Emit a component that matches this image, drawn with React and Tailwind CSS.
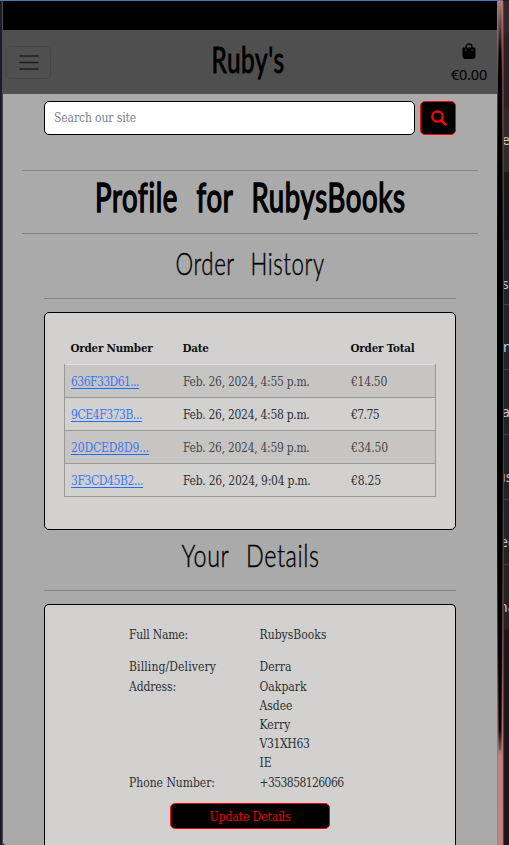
import { useLayoutEffect, useRef, useState } from "react";

// Slab text whose letter spacing is computed so that it spans `w` pixels.
function Slab({ w, className = "", children }) {
  const ref = useRef(null);
  const [gap, setGap] = useState(0);
  useLayoutEffect(() => {
    const width = ref.current.getBoundingClientRect().width;
    setGap((w - width) / String(children).length);
  }, [w, children]);
  return (
    <span ref={ref} className={"inline-block whitespace-nowrap " + className} style={{ letterSpacing: gap + "px" }}>
      {children}
    </span>
  );
}

// Tall, condensed display lettering squeezed to `w` pixels.
function Script({ w, className = "", children }) {
  const ref = useRef(null);
  const [scale, setScale] = useState(1);
  useLayoutEffect(() => {
    setScale(w / ref.current.offsetWidth);
  }, [w]);
  return (
    <span className="flex justify-center" style={{ width: w + "px" }}>
      <span
        ref={ref}
        className={"inline-block shrink-0 whitespace-nowrap font-['Lato',sans-serif] " + className}
        style={{ transform: `scaleX(${scale})` }}
      >
        {children}
      </span>
    </span>
  );
}

const orders = [
  ["636F33D61...", 68, "Feb. 26, 2024, 4:55 p.m.", 126.5, "€14.50", 36],
  ["9CE4F373B...", 71, "Feb. 26, 2024, 4:58 p.m.", 126.5, "€7.75", 28],
  ["20DCED8D9...", 78, "Feb. 26, 2024, 4:59 p.m.", 126.5, "€34.50", 37],
  ["3F3CD45B2...", 72, "Feb. 26, 2024, 9:04 p.m.", 127.5, "€8.25", 30],
];

const details = [
  ["Full Name:", 59, "RubysBooks", 67, "h-8"],
  ["Billing/Delivery", 87, "Derra", 32, "h-[20px]"],
  ["Address:", 47, "Oakpark", 47, "h-[19px]"],
  ["", 0, "Asdee", 33, "h-[19px]"],
  ["", 0, "Kerry", 31, "h-[19px]"],
  ["", 0, "V31XH63", 50, "h-[19px]"],
  ["", 0, "IE", 12, "h-[20px]"],
  ["Phone Number:", 86, "+353858126066", 84, "h-[20px]"],
];

const sidebar = [
  ["", "h-[32px] bg-[#292a2d]", ""],
  ["", "h-[75px] bg-[#222427]", ""],
  ["ep", "h-[64px] bg-[#2b2c2f]", "-ml-[2px]"],
  ["", "h-[68px] bg-[#18191d]", ""],
  ["s,", "h-[65px] bg-[#232427] border-b pt-[24px]", "-ml-[2px]"],
  ["n", "h-[65px] bg-[#232427] border-b pt-[20px]", "-ml-[1px]"],
  ["ar", "h-[65px] bg-[#232427] border-b pt-[20px]", "-ml-[2px]"],
  ["us", "h-[65px] bg-[#232427] border-b pt-[20px]", "-ml-[7px]"],
  ["ed", "h-[65px] bg-[#232427] border-b pt-[20px]", "-ml-[4px]"],
  ["na", "h-[64px] bg-[#232427] pt-[20px]", "-ml-[5px]"],
];

export default function App() {
  return (
    <div className="flex h-[845px] w-[509px] flex-col overflow-hidden bg-[#17191d] font-['DejaVu_Serif_Condensed','DejaVu_Serif',serif] text-[12px] leading-[20px] text-[#2c3034]">
      <div className="h-px w-[503px] shrink-0 bg-[#4a7ab5]" />
      <div className="flex h-[844px]">
        <div className="w-[3px] shrink-0 border-r border-[#4c4c50] bg-[#1c1c22]" />
        <main className="flex w-[494px] shrink-0 flex-col overflow-hidden rounded-bl-[3px] bg-[#aaaaaa]">
          <div className="h-[29px] shrink-0 bg-black" />
          <nav className="flex h-16 shrink-0 items-center justify-between bg-[#4f4f4f] pl-[3px] pr-[10px]">
            <button className="flex h-[33px] w-[45px] items-center justify-center rounded-[5px] border border-[#464646]">
              <svg width="20" height="15" viewBox="0 0 20 15" stroke="#1f1f1f" strokeWidth="1.6" strokeLinecap="round">
                <path d="M1 1h18M1 7.5h18M1 14h18" />
              </svg>
            </button>
            <div className="-mt-[7px] ml-[-5px] h-[50px] text-black">
              <Script w={73} className="text-[36px] leading-[50px] tracking-wide [-webkit-text-stroke:1px_black]">Ruby's</Script>
            </div>
            <div className="flex flex-col items-center pt-[3px] text-black">
              <svg width="14" height="16" viewBox="0 0 14 16" className="mb-1">
                <path d="M1 5h12v8.5a2 2 0 0 1-2 2H3a2 2 0 0 1-2-2z" fill="#000" stroke="#000" strokeWidth="1" strokeLinejoin="round" />
                <path d="M4 7V4a3 3 0 0 1 6 0v3" fill="none" stroke="#000" strokeWidth="1.3" />
                <circle cx="4" cy="7.2" r=".7" fill="#4f4f4f" />
                <circle cx="10" cy="7.2" r=".7" fill="#4f4f4f" />
              </svg>
              <Slab w={36} className="font-['Noto_Sans',sans-serif] text-[14.5px] leading-[22px]">€0.00</Slab>
            </div>
          </nav>

          <div className="ml-[41px] mt-[7px] flex h-[34px] w-[412px] shrink-0 gap-[5px]">
            <div className="flex w-[371px] items-center rounded-[5px] border border-black bg-white pl-[9px] text-[#7c858d]">
              <Slab w={82}>Search our site</Slab>
            </div>
            <button className="flex w-[36px] items-center justify-center rounded-[5px] border border-[#ff0000] bg-black">
              <svg width="16" height="16" viewBox="0 0 16 16" fill="none" stroke="#ff0000" strokeWidth="2.3" className="ml-[2px]">
                <circle cx="6.5" cy="6.5" r="5.2" />
                <path d="M10.3 10.3l5 5" strokeWidth="2.6" />
              </svg>
            </button>
          </div>

          <div className="mx-[19px] mt-[35px] flex h-[64px] shrink-0 justify-center border-y border-[#858585] text-black">
            <h1 className="flex">
              <Script w={311} className="text-[41px] leading-[51px] tracking-wide [-webkit-text-stroke:1.6px_black] [word-spacing:16px]">Profile for RubysBooks</Script>
            </h1>
          </div>

          <section className="mx-[41px] flex shrink-0 flex-col">
            <h2 className="flex h-[65px] justify-center border-b border-[#858585] text-black">
              <Script w={149} className="text-[32px] font-light leading-[57px] tracking-wide [-webkit-text-stroke:0.4px_black] [word-spacing:14px]">Order History</Script>
            </h2>
            <div className="mt-[13px] h-[218px] rounded-[5px] border border-black bg-[#d2d1cf] px-[19px] pt-[19px]">
              <div className="flex h-[32px] items-center pl-[6.5px] font-bold text-[#111]">
                <div className="w-[112px]"><Slab w={82} className="text-[11.5px]">Order Number</Slab></div>
                <div className="w-[168px]"><Slab w={26} className="text-[11.5px]">Date</Slab></div>
                <div><Slab w={64} className="text-[11.5px]">Order Total</Slab></div>
              </div>
              <div className="border-x border-[#999999]">
                {orders.map(([id, a, date, b, total, c], i) => (
                  <div
                    key={id}
                    className={
                      "flex items-center border-b border-[#999999] pl-[6px] pt-px " +
                      (i === 0 ? "h-[34px] border-t border-t-[#d9dde4] " : "h-[33px] ") +
                      (i % 2 === 0 ? "bg-[#c7c5c3] text-[#45484b]" : "")
                    }
                  >
                    <div className="w-[112px] text-[#3d76f5]">
                      <Slab w={a} className="underline decoration-[#1d6ffd] underline-offset-2">{id}</Slab>
                    </div>
                    <div className="w-[168px]"><Slab w={b}>{date}</Slab></div>
                    <div><Slab w={c}>{total}</Slab></div>
                  </div>
                ))}
              </div>
            </div>
          </section>

          <section className="mx-[41px] flex shrink-0 flex-col">
            <h2 className="flex h-[61px] justify-center border-b border-[#858585] text-black">
              <Script w={138} className="text-[32px] font-light leading-[50px] tracking-wide [-webkit-text-stroke:0.4px_black] [word-spacing:14px]">Your Details</Script>
            </h2>
            <div className="mt-[13px] flex h-[260px] flex-col rounded-t-[5px] border border-b-0 border-black bg-[#d2d1cf] pt-[20px]">
              {details.map(([label, a, value, b, h]) => (
                <div key={value} className={"flex shrink-0 pl-[84px] " + h}>
                  <div className="w-[130.5px]">{label && <Slab w={a}>{label}</Slab>}</div>
                  <div><Slab w={b}>{value}</Slab></div>
                </div>
              ))}
              <button className="ml-[125px] mt-[10px] flex h-[26px] w-[160px] shrink-0 items-center justify-center rounded-[5px] border border-[#ff0000] bg-black pt-[2px] text-[#f00000]">
                <Slab w={81}>Update Details</Slab>
              </button>
            </div>
          </section>
        </main>

        <div className="relative w-[6px] shrink-0 bg-[linear-gradient(to_bottom,#d66868_0,#863f3f_70px,#351818_170px,#000_290px,#000_440px,#351818_560px,#a45555_690px,#c46c6c_755px,#d07070_100%)]">
          <div className="absolute inset-y-0 left-px w-[4px] bg-[linear-gradient(to_bottom,#b98080_0,#000_75px,#000_650px,#5c3434_730px,#ba8585_755px,#ba8585_100%)]" />
          <div className="absolute left-[2px] top-[2px] h-[747px] w-[2px] bg-[linear-gradient(to_bottom,#888_0,#000_50px,#000_725px,#666_100%)]" />
        </div>
        <aside className="w-[6px] shrink-0 overflow-hidden border-l border-[#454549] font-['Noto_Sans',sans-serif] text-[14px] text-[#c5c9cf]">
          {sidebar.map(([text, cls, shift], i) => (
            <div key={i} className={"flex items-center overflow-hidden border-[#414246] " + cls}>
              <span className={"block " + shift}>{text}</span>
            </div>
          ))}
        </aside>
      </div>
    </div>
  );
}
